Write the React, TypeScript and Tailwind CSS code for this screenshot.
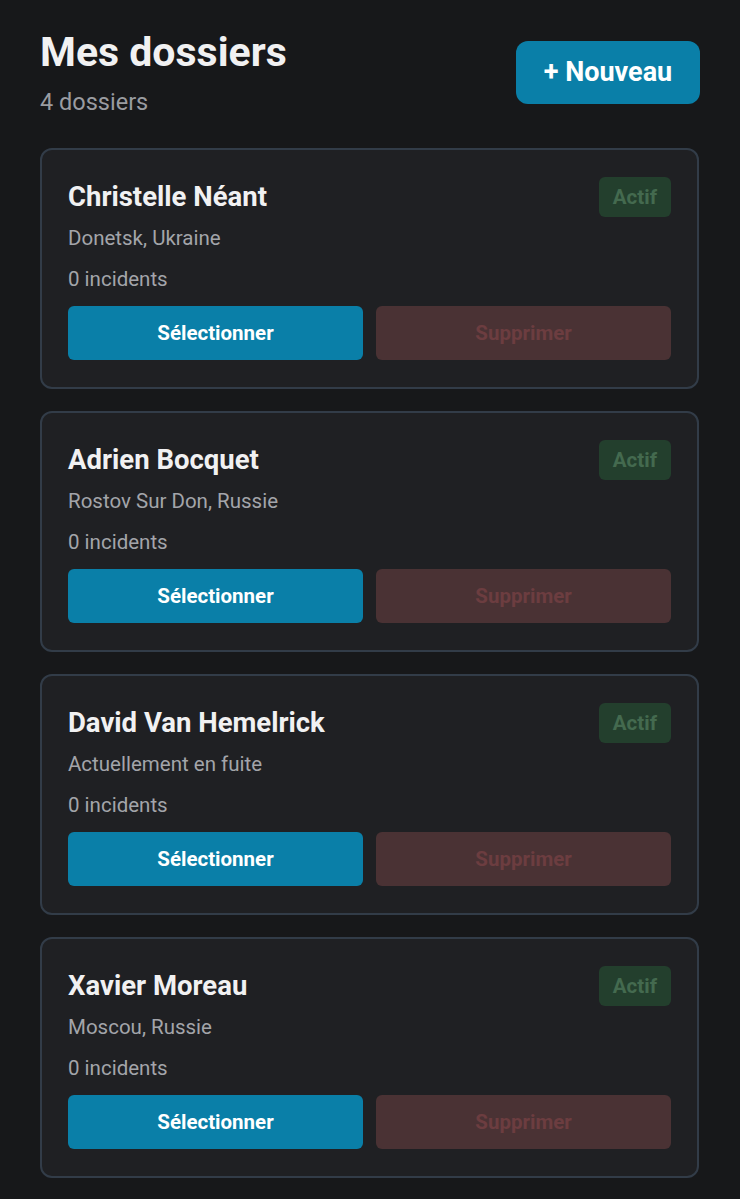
import React from "react";

const dossiers = [
  { name: "Christelle Néant", loc: "Donetsk, Ukraine" },
  { name: "Adrien Bocquet", loc: "Rostov Sur Don, Russie" },
  { name: "David Van Hemelrick", loc: "Actuellement en fuite" },
  { name: "Xavier Moreau", loc: "Moscou, Russie" },
];

export default function App() {
  return (
    <div
      className="min-h-[1199px] bg-[#17181a] pl-10 pr-[41px] pt-[28px] pb-6"
      style={{ fontFamily: "Roboto, 'Noto Sans', sans-serif" }}
    >
      <div className="flex items-start justify-between">
        <div>
          <h1 className="text-[41px] font-bold leading-[48px] text-[#f1f1f2]">Mes dossiers</h1>
          <p className="mt-[12px] text-[23.5px] leading-[28px] text-[#9a9ca1]">4 dossiers</p>
        </div>
        <button className="mt-[13px] -mr-px h-[63px] w-[184px] rounded-[12px] bg-[#0a7fa8] text-[27px] font-bold text-white">
          + Nouveau
        </button>
      </div>
      <div className="mt-[32px] flex flex-col gap-[22px]">
        {dossiers.map((d) => (
          <div
            key={d.name}
            className="rounded-[12px] border-2 border-[#323c48] bg-[#1f2023] px-[26px] pt-[27px] pb-[27px]"
          >
            <div className="flex items-start justify-between">
              <div>
                <div className="mt-[3px] text-[27.5px] font-bold leading-[34px] text-[#f1f1f2]">{d.name}</div>
                <div className="mt-[10px] text-[20.5px] leading-[28px] text-[#a3a5aa]">{d.loc}</div>
                <div className="mt-[13px] text-[20.5px] leading-[28px] text-[#a3a5aa]">0 incidents</div>
              </div>
              <div className="flex h-[40px] items-center rounded-[6px] bg-[#233f2d] px-[14px] text-[20.5px] font-bold text-[#446a4f]">
                Actif
              </div>
            </div>
            <div className="mt-[13px] grid grid-cols-2 gap-[13px]">
              <button className="h-[54px] rounded-[6px] bg-[#0a7fa8] text-[20.5px] font-bold text-white">
                Sélectionner
              </button>
              <button className="h-[54px] rounded-[6px] bg-[#4a3234] text-[20.5px] font-bold text-[#6c3d40]">
                Supprimer
              </button>
            </div>
          </div>
        ))}
      </div>
    </div>
  );
}
